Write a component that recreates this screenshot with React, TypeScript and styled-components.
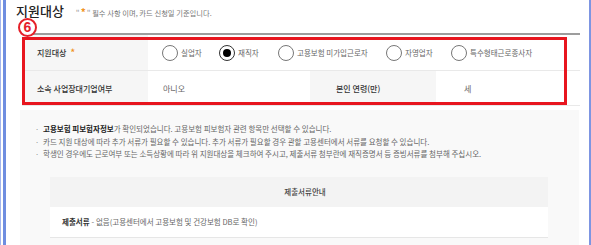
import React from "react";
import styled, { createGlobalStyle } from "styled-components";

const Global = createGlobalStyle`
  html, body { margin: 0; padding: 0; background: #fff; }
  body {
    width: 591px; height: 245px; overflow: hidden;
    font-family: "Noto Sans CJK KR", "Noto Sans", sans-serif;
    -webkit-font-smoothing: antialiased;
  }
  * { box-sizing: border-box; }
`;

const Page = styled.div`
  display: flex;
  width: 591px;
  height: 245px;
  overflow: hidden;
`;

const LeftRail = styled.div`
  width: 6px;
  flex: none;
  background: linear-gradient(to right, #a3b5ec 0 1px, #fff 1px 3px, #6f8ee0 3px 6px);
`;

const RightRail = styled.div`
  width: 2px;
  flex: none;
  background: #7d95e2;
`;

const Main = styled.main`
  position: relative;
  flex: 1;
  min-width: 0;
  padding: 0 9px 0 10px;
`;

const Header = styled.div`
  display: flex;
  align-items: baseline;
  gap: 12px;
  height: 33px;
  padding-top: 3px;
`;

const Title = styled.h2`
  margin: 0;
  font-size: 13px;
  line-height: 16px;
  font-weight: 500;
  color: #222;
`;

const Sub = styled.span`
  font-size: 7.3px;
  color: #777;
`;

const Quote = styled.span`
  color: #999;
  font-size: 8px;
`;

const Star = styled.span<{ $size?: number }>`
  color: #f0931e;
  font-weight: 700;
  font-size: ${(p) => p.$size ?? 9}px;
  margin: 0 1px;
`;

const Rule = styled.div`
  margin-left: 6px;
  height: 2px;
  background: #9d9d9d;
`;

const Table = styled.div`
  margin-left: 6px;
`;

const Row = styled.div<{ $cols: string; $h: number }>`
  display: grid;
  grid-template-columns: ${(p) => p.$cols};
  height: ${(p) => p.$h}px;
  border-bottom: 1px solid #e9e9e9;
`;

const Label = styled.div<{ $pad?: number }>`
  display: flex;
  align-items: center;
  gap: 3px;
  padding-left: ${(p) => p.$pad ?? 15}px;
  background: #f6f6f6;
  font-size: 8px;
  font-weight: 500;
  color: #333;
  white-space: nowrap;
`;

const Value = styled.div<{ $pad?: number }>`
  display: flex;
  align-items: center;
  padding-left: ${(p) => p.$pad ?? 15}px;
  font-size: 8px;
  color: #666;
`;

const RadioGroup = styled.div`
  display: flex;
  align-items: center;
  padding-left: 14px;
`;

const RadioItem = styled.label<{ $w: number }>`
  display: flex;
  align-items: center;
  gap: 3px;
  width: ${(p) => p.$w}px;
  font-size: 7.5px;
  color: #666;
  white-space: nowrap;
`;

const RadioCircle = styled.span<{ $on?: boolean }>`
  flex: none;
  width: 16px;
  height: 16px;
  border-radius: 50%;
  border: 1px solid ${(p) => (p.$on ? "#333" : "#777")};
  background: #fff;
  display: flex;
  align-items: center;
  justify-content: center;
  &::after {
    content: "";
    display: ${(p) => (p.$on ? "block" : "none")};
    width: 8px;
    height: 8px;
    border-radius: 50%;
    background: #000;
  }
`;

const Highlight = styled.div`
  position: absolute;
  left: 16px;
  top: 37px;
  width: 545px;
  height: 68px;
  border: 3px solid #e8161f;
  pointer-events: none;
`;

const Badge = styled.div`
  position: absolute;
  left: 12px;
  top: 18px;
  width: 19px;
  height: 19px;
  border-radius: 50%;
  border: 2px solid #e52029;
  background: #fff;
  color: #e52029;
  font-family: "Liberation Sans", Arial, sans-serif;
  font-weight: 700;
  font-size: 14px;
  line-height: 15px;
  text-align: center;
`;

const Notes = styled.div`
  margin: 4px 1px 0 4px;
  height: 135px;
  padding: 13px 15px 0 15px;
  background: #f9f9f9;
`;

const List = styled.ul`
  margin: 0;
  padding: 0;
  list-style: none;
`;

const Item = styled.li`
  display: flex;
  font-size: 7.5px;
  line-height: 12.5px;
  color: #666;
  white-space: nowrap;
  &::before {
    content: "·";
    width: 8px;
    flex: none;
    color: #888;
  }
`;

const Strong = styled.b`
  color: #222;
  font-weight: 700;
`;

const DocTable = styled.div`
  margin: 16px 16px 0 15px;
  background: #fff;
`;

const DocHead = styled.div`
  height: 30px;
  display: flex;
  align-items: center;
  justify-content: center;
  padding-left: 12px;
  background: #f3f3f3;
  font-size: 7.5px;
  font-weight: 500;
  color: #444;
`;

const DocRow = styled.div`
  height: 31px;
  display: flex;
  align-items: center;
  padding-left: 12px;
  border-bottom: 1px solid #e6e6e6;
  font-size: 7.5px;
  color: #666;
  white-space: nowrap;
`;

const DocStrong = styled.b`
  color: #333;
  font-weight: 700;
  margin-right: 2px;
`;

const options: { label: string; w: number }[] = [
  { label: "실업자", w: 57 },
  { label: "재직자", w: 59 },
  { label: "고용보험 미가입근로자", w: 108 },
  { label: "자영업자", w: 65 },
  { label: "특수형태근로종사자", w: 90 },
];

export default function App() {
  return (
    <>
      <Global />
      <Page>
        <LeftRail />
        <Main>
          <Header>
            <Title>지원대상</Title>
            <Sub>
              <Quote>"</Quote>
              <Star $size={10}>*</Star>
              <Quote>"</Quote> 필수 사항 이며, 카드 신청일 기준입니다.
            </Sub>
          </Header>
          <Rule />
          <Table>
            <Row $cols="126px 1fr" $h={36}>
              <Label>
                지원대상 <Star>*</Star>
              </Label>
              <RadioGroup>
                {options.map((o) => (
                  <RadioItem key={o.label} $w={o.w}>
                    <RadioCircle $on={o.label === "재직자"} />
                    {o.label}
                  </RadioItem>
                ))}
              </RadioGroup>
            </Row>
            <Row $cols="126px 162px 126px 1fr" $h={35}>
              <Label>소속 사업장대기업여부</Label>
              <Value>아니오</Value>
              <Label $pad={26}>본인 연령(만)</Label>
              <Value $pad={28}>세</Value>
            </Row>
          </Table>
          <Notes>
            <List>
              <Item>
                <span>
                  <Strong>고용보험 피보험자정보</Strong>가 확인되었습니다. 고용보험 피보험자 관련 항목만 선택할 수 있습니다.
                </span>
              </Item>
              <Item>카드 지원 대상에 따라 추가 서류가 필요할 수 있습니다. 추가 서류가 필요할 경우 관할 고용센터에서 서류를 요청할 수 있습니다.</Item>
              <Item>학생인 경우에도 근로여부 또는 소득상황에 따라 위 지원대상을 체크하여 주시고, 제출서류 첨부란에 재직증명서 등 증빙서류를 첨부해 주십시오.</Item>
            </List>
            <DocTable>
              <DocHead>제출서류안내</DocHead>
              <DocRow>
                <DocStrong>제출서류</DocStrong> - 없음(고용센터에서 고용보험 및 건강보험 DB로 확인)
              </DocRow>
            </DocTable>
          </Notes>
          <Badge>6</Badge>
          <Highlight />
        </Main>
        <RightRail />
      </Page>
    </>
  );
}
